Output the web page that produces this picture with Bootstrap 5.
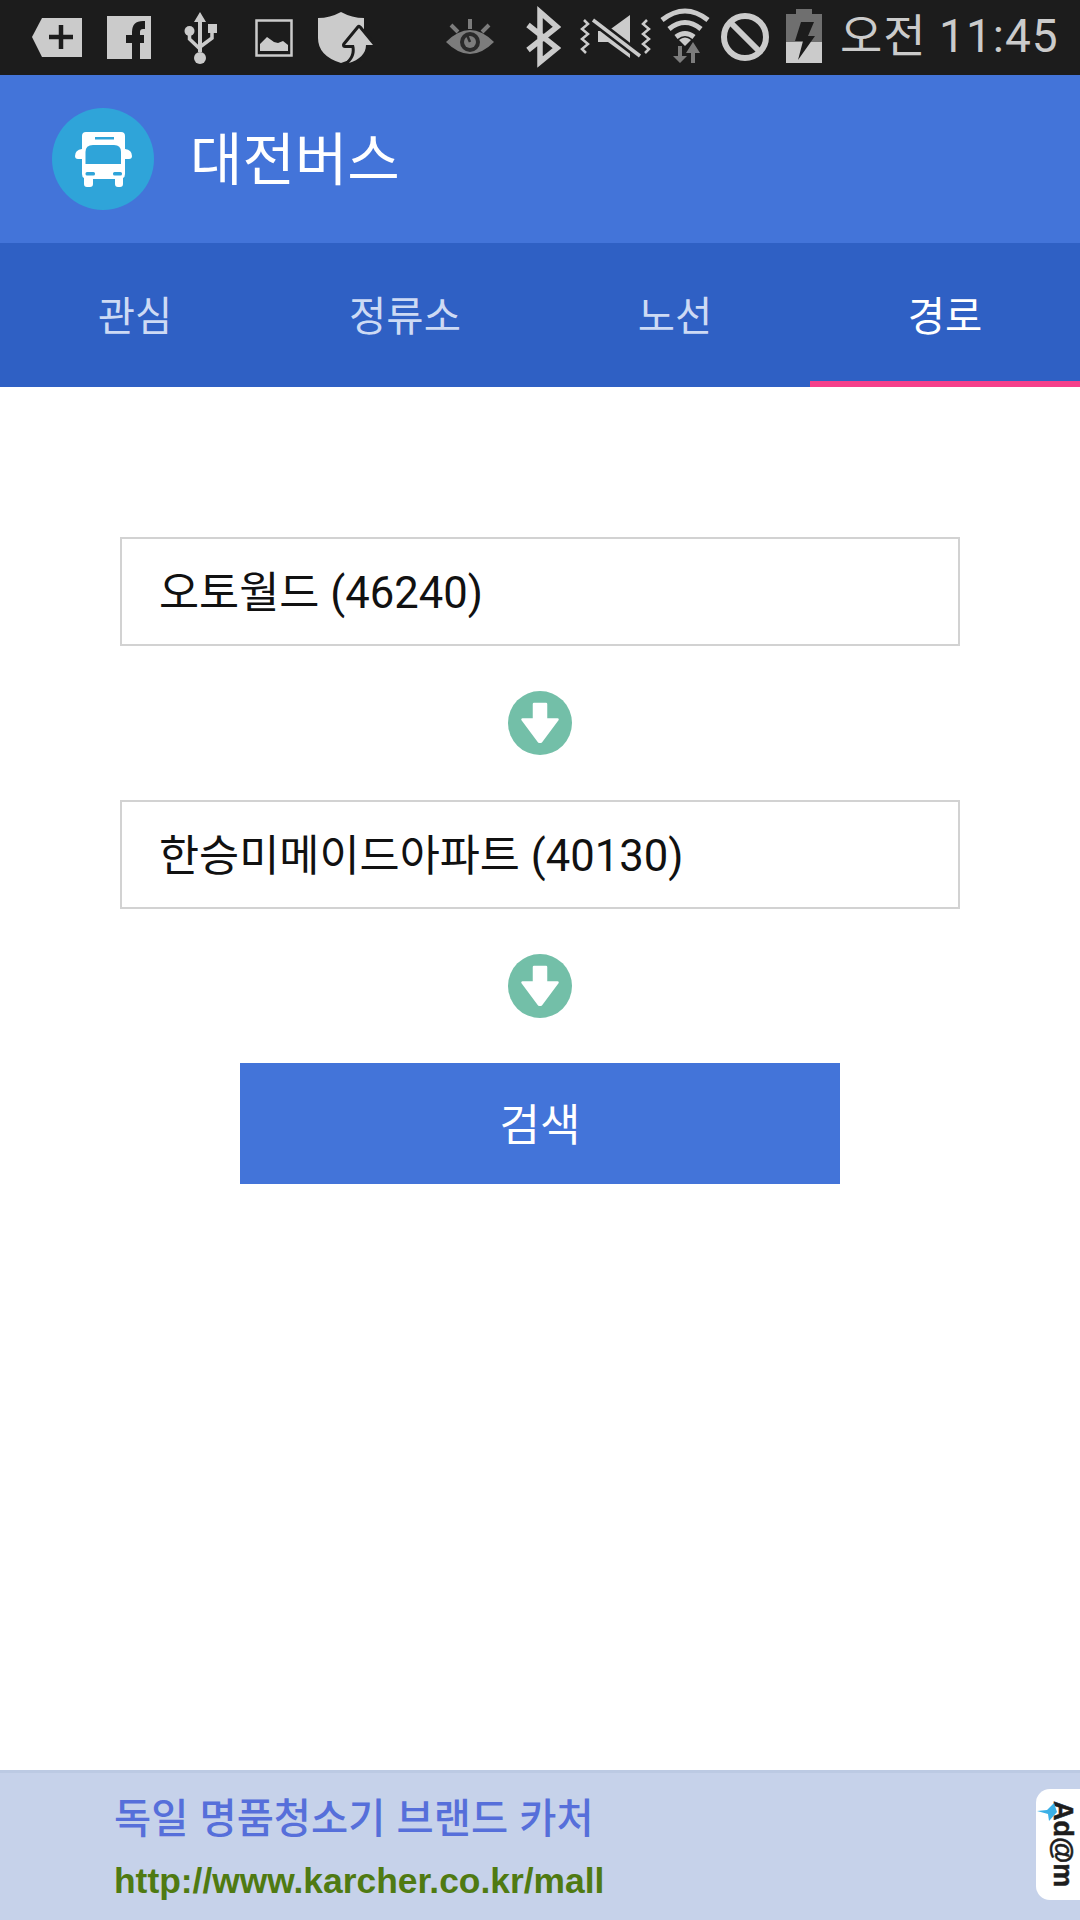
<!DOCTYPE html>
<html lang="ko">
<head>
<meta charset="utf-8">
<title>대전버스</title>
<link href="https://cdn.jsdelivr.net/npm/bootstrap@5.3.0/dist/css/bootstrap.min.css" rel="stylesheet">
<style>
html,body{margin:0;height:1920px;width:1080px;overflow:hidden;background:#fff;font-family:Roboto,"Noto Sans CJK KR",sans-serif}
.page-wrap{width:1080px;height:1920px}
.status-strip{height:75px;background:#1c1c1c;padding-left:32px;color:#cbcbcb}
.status-strip svg{display:block;flex:none}
.g25{margin-left:25px}.g33{margin-left:33px}.g38{margin-left:38px}.g73{margin-left:73px}.g32{margin-left:32px}.g19{margin-left:19px}.g9{margin-left:9px}.g10{margin-left:10px}.g16{margin-left:16px}
.clock{margin-left:18px;font-size:46px;line-height:72px;font-weight:400;letter-spacing:1px;white-space:nowrap}
.app-head{height:168px;background:#4374d9;padding-left:52px}
.app-logo{width:102px;height:102px;background:#2fa4d9;border-radius:50%}
.app-name{margin:2px 0 0 36px;font-size:57px;line-height:1;color:#fff;font-weight:400}
.tab-item{flex:0 0 270px;height:144px;color:#cddaf4;font-size:40.5px;line-height:1;text-decoration:none;padding-top:4px}
.tab-strip{height:144px;background:#2f60c4}
.tab-item.is-on{color:#fff;border-bottom:6px solid #f5408a;padding-top:10px}
.route-form{padding-top:150px}
.stop-field.form-control{width:840px;height:109px;border:2px solid #d2d2d2;border-radius:0;padding:0 37px 5px;font-size:43.6px;color:#111;font-family:Roboto,"Noto Sans CJK KR",sans-serif;background:#fff}
.down-mark{display:block;margin:45px 0 45px}
.find-btn.btn{width:600px;height:121px;background:#4374d9;border:0;border-radius:0;color:#fff;font-size:44px;padding:5px 0 0}
.ad-strip{height:150px;background:#c6d2ea;border-top:3px solid #bccae3;margin-top:auto;padding-left:114px}
.ad-title{font-family:"Liberation Sans","Noto Sans CJK KR",sans-serif;font-size:40.4px;font-weight:500;color:#566fda;line-height:1;margin-top:26px}
.ad-url{font-family:"Liberation Sans",sans-serif;font-size:35.4px;font-weight:700;color:#4f7a12;line-height:1;margin-top:25px}
.ad-badge{width:44px;height:111px;background:#fff;border-radius:14px 0 0 14px;margin-top:16px;padding-left:8px}
.ad-badge-text{writing-mode:vertical-rl;font-family:"Liberation Sans",sans-serif;font-weight:700;font-size:27px;line-height:1;color:#1d1d1d;-webkit-text-stroke:.5px #1d1d1d}
.ad-bolt{position:absolute;left:1px;top:14px}
</style>
</head>
<body>
<div class="page-wrap d-flex flex-column">
  <div class="status-strip d-flex align-items-stretch">
    <!-- tag plus -->
    <svg width="50" height="75" viewBox="0 0 50 75"><path d="M0 37 10 18H50V57H10Z" fill="#cbcbcb"/><path d="M17 37H41M29 25V49" stroke="#1c1c1c" stroke-width="4.500" fill="none"/></svg>
    <!-- facebook -->
    <svg class="g25" width="44" height="75" viewBox="0 0 44 75"><rect y="16" width="44" height="43" fill="#cbcbcb"/><path d="M29 59V32Q29 25 36 25H38M19 39H37" stroke="#1c1c1c" stroke-width="8" fill="none"/></svg>
    <!-- usb -->
    <svg class="g33" width="33" height="75" viewBox="0 0 33 75" fill="#cbcbcb"><path d="M16 12 22 22H18V52H14V22H10Z"/><circle cx="16" cy="58" r="6"/><circle cx="5.500" cy="31" r="5"/><rect x="24" y="24" width="9" height="9"/><path d="M5.500 33V39L16 49M28 31V38L16 47" stroke="#cbcbcb" stroke-width="3.500" fill="none"/></svg>
    <!-- picture -->
    <svg class="g38" width="38" height="75" viewBox="0 0 38 75"><rect x="1.500" y="20.500" width="35" height="35" fill="none" stroke="#cbcbcb" stroke-width="2.500"/><path d="M5 51V44L12 37 19 42 23 43 28 41 33 45V51Z" fill="#cbcbcb"/></svg>
    <!-- shield -->
    <svg class="g25" width="55" height="75" viewBox="0 0 55 75"><path d="M23 12Q12 18 0 18V38Q0 56 23 63Q46 56 46 38V18Q34 18 23 12Z" fill="#cbcbcb"/><path d="M41 28 55 45H48C48 54 41 60 31 63C36 58 38 52 36 45H27Z" fill="#1c1c1c" stroke="#1c1c1c" stroke-width="6" stroke-linejoin="round"/><path d="M41 28 55 45H48C48 54 41 60 31 63C36 58 38 52 36 45H27Z" fill="#cbcbcb"/></svg>
    <!-- eye -->
    <svg class="g73" width="48" height="75" viewBox="0 0 48 75"><path d="M0 42Q24 18 48 42Q24 66 0 42Z" fill="#7c7c7c"/><circle cx="24" cy="42" r="10" fill="#2a2a2a"/><circle cx="24" cy="42" r="6" fill="#7c7c7c"/><path d="M24 42 21 35" stroke="#2a2a2a" stroke-width="2.500"/><path d="M24 19V29M5 25 12 32M43 25 36 32" stroke="#7c7c7c" stroke-width="4" fill="none"/></svg>
    <!-- bluetooth -->
    <svg class="g32" width="35" height="75" viewBox="0 0 35 75"><path d="M2 25 31 48 14 62V12L31 27 2 50" fill="none" stroke="#cbcbcb" stroke-width="5.500"/></svg>
    <!-- vibrate mute -->
    <svg class="g19" width="71" height="75" viewBox="0 0 71 75" fill="none" stroke="#cbcbcb"><path d="M4 20 8 24 2 29 8 34 2 39 8 44 2 49 6 53M67 20 63 24 69 29 63 34 69 39 63 44 69 49 65 53" stroke-width="2.500"/><path d="M18 31H28L50 15V58L28 42H18Z" fill="#cbcbcb" stroke="none"/><path d="M13 20 60 56" stroke="#1c1c1c" stroke-width="9"/><path d="M13 20 60 56" stroke-width="3.500"/></svg>
    <!-- wifi -->
    <svg class="g9" width="50" height="75" viewBox="0 0 50 75" fill="none"><path d="M2 20Q25 2 48 20M9 29Q25 16 41 29M16 37Q25 30 34 37" stroke="#cbcbcb" stroke-width="5"/><path d="M19 40Q25 35 31 40L25 46Z" fill="#cbcbcb"/><path d="M18 46V56H13L20 63 27 56H22V46ZM31 63V53H26L33 42 40 53H35V63Z" fill="#7c7c7c"/></svg>
    <!-- blocked -->
    <svg class="g10" width="50" height="75" viewBox="0 0 50 75" fill="none" stroke="#cbcbcb" stroke-width="6"><circle cx="25" cy="37" r="21"/><path d="M10 22 40 52"/></svg>
    <!-- battery -->
    <svg class="g16" width="36" height="75" viewBox="0 0 36 75"><path d="M0 14H10V9H26V14H36V42H0Z" fill="#6f6f6f"/><rect y="42" width="36" height="21" fill="#cbcbcb"/><path d="M15 22H28L22 36H29L12 60 17 41H9Z" fill="#1c1c1c"/></svg>
    <span class="clock">오전 11:45</span>
  </div>

  <header class="app-head d-flex align-items-center">
    <span class="app-logo d-flex align-items-center justify-content-center">
      <svg width="57" height="55" viewBox="0 0 57 55"><path d="M11 0H46Q50 0 50 4V17Q57 18 57 24Q57 27 54 27H50V42Q50 45 48 46V52Q48 55 45 55H43Q40 55 40 52V47H18V52Q18 55 15 55H12Q9 55 9 52V46Q7 45 7 42V27H3Q0 27 0 24Q0 18 7 17V4Q7 0 11 0Z" fill="#fff"/><rect x="20" y="5" width="19" height="2.500" fill="#2fa4d9"/><path d="M10.500 32V20Q10.500 13 18 13H39Q46 13 46 20V32Z" fill="#2fa4d9"/><rect x="10.500" y="40" width="9.500" height="3.500" rx="1.500" fill="#2fa4d9"/><rect x="38" y="40" width="9" height="3.500" rx="1.500" fill="#2fa4d9"/></svg>
    </span>
    <h1 class="app-name">대전버스</h1>
  </header>

  <nav class="tab-strip d-flex">
    <a class="tab-item d-flex align-items-center justify-content-center" href="#">관심</a>
    <a class="tab-item d-flex align-items-center justify-content-center" href="#">정류소</a>
    <a class="tab-item d-flex align-items-center justify-content-center" href="#">노선</a>
    <a class="tab-item is-on d-flex align-items-center justify-content-center" href="#">경로</a>
  </nav>

  <main class="route-form d-flex flex-column align-items-center">
    <input class="stop-field form-control" type="text" value="오토월드 (46240)">
    <svg class="down-mark" width="64" height="64" viewBox="0 0 64 64"><circle cx="32" cy="32" r="32" fill="#73bfa8"/><path d="M26 13H38V28.500H49.500L33.500 50Q32 51.500 30.500 50L14.500 28.500H26Z" fill="#fff" stroke="#fff" stroke-width="2.500" stroke-linejoin="round"/></svg>
    <input class="stop-field form-control" type="text" value="한승미메이드아파트 (40130)">
    <svg class="down-mark" width="64" height="64" viewBox="0 0 64 64"><circle cx="32" cy="32" r="32" fill="#73bfa8"/><path d="M26 13H38V28.500H49.500L33.500 50Q32 51.500 30.500 50L14.500 28.500H26Z" fill="#fff" stroke="#fff" stroke-width="2.500" stroke-linejoin="round"/></svg>
    <button class="find-btn btn" type="button">검색</button>
  </main>

  <aside class="ad-strip d-flex">
    <div class="flex-grow-1">
      <div class="ad-title">독일 명품청소기 브랜드 카처</div>
      <div class="ad-url">http://www.karcher.co.kr/mall</div>
    </div>
    <div class="ad-badge d-flex flex-column align-items-center justify-content-center position-relative">
      <span class="ad-badge-text">Ad@m</span>
      <svg class="ad-bolt" width="20" height="18" viewBox="0 0 20 18"><path d="M0 8 10 7 17 0 20 9 12 18 11 11Z" fill="#3bb0e6"/></svg>
    </div>
  </aside>
</div>
<script src="https://cdn.jsdelivr.net/npm/bootstrap@5.3.0/dist/js/bootstrap.bundle.min.js"></script>
</body>
</html>
